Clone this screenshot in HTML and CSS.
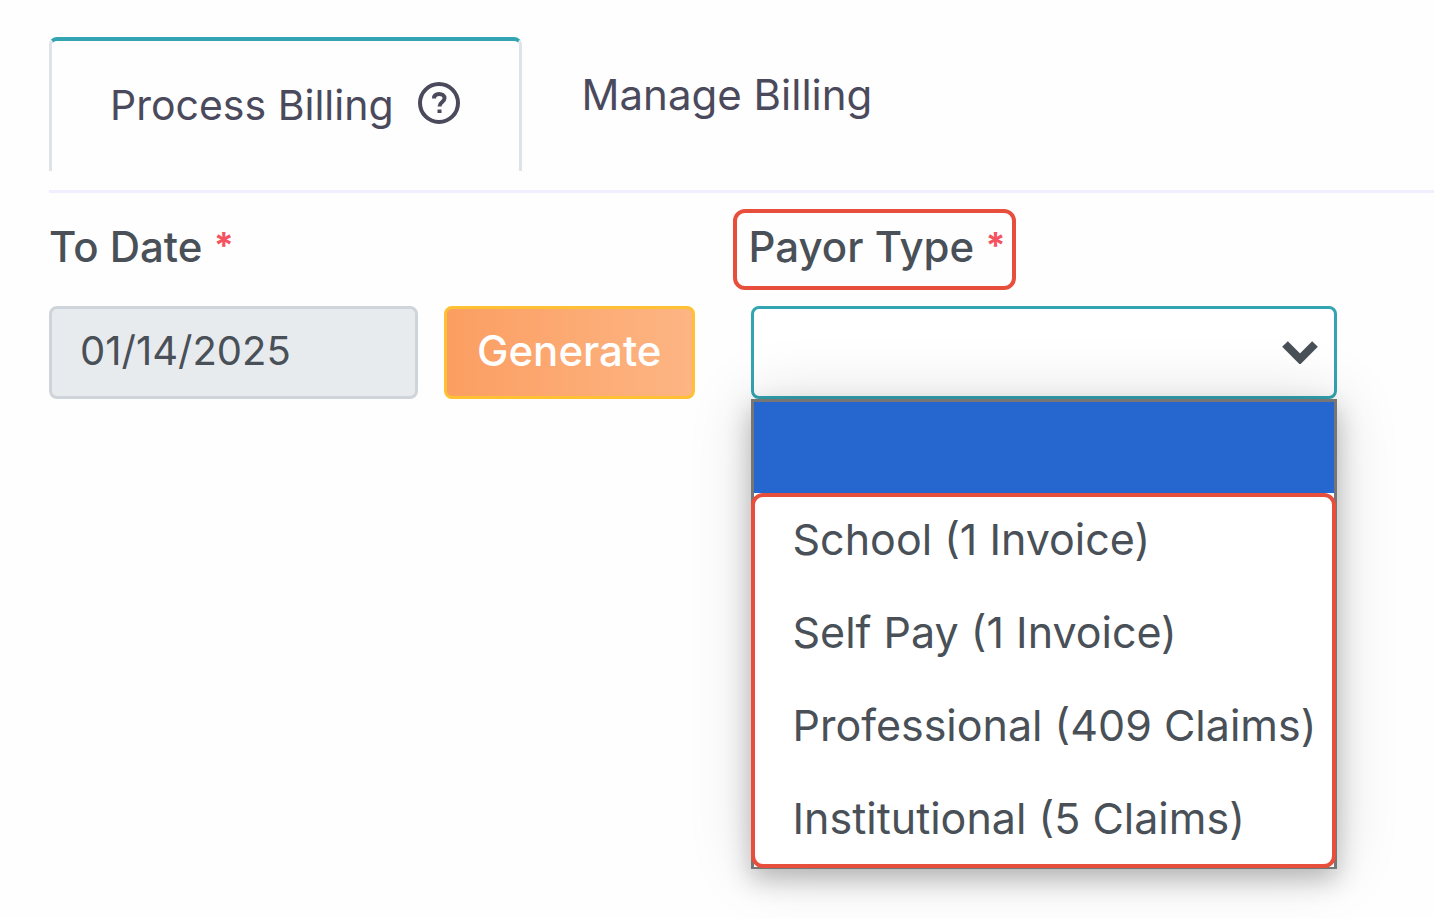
FILE: index.html
```html
<!DOCTYPE html>
<html lang="en">
  <head>
    <meta charset="UTF-8" />
    <meta name="viewport" content="width=device-width, initial-scale=1.0" />
    <title>Process Billing</title>
    <link rel="stylesheet" href="styles.css">
  </head>
  <body>
    <nav class="tabs">
      <a class="tab active" href="#process">
        Process Billing
        <svg class="help-icon" viewBox="0 0 42 42" aria-hidden="true">
          <circle cx="21" cy="21" r="19" />
          <path d="M16 16.5c0-3 2.200-4.500 5.200-4.500s5.300 1.700 5.300 4.300c0 3.700-5 3.700-5 8.200" />
          <path d="M21.500 27.500v3.500" />
        </svg>
      </a>
      <a class="tab" href="#manage">Manage Billing</a>
    </nav>

    <form class="billing-form">
      <div class="field">
        <label class="label" for="to-date">To Date <span class="required">*</span></label>
        <div class="control-row">
          <input class="control date" id="to-date" type="text" value="01/14/2025" readonly>
          <button class="control generate" type="button">Generate</button>
        </div>
      </div>

      <div class="field">
        <label class="label highlight" for="payor-type">Payor Type <span class="required">*</span></label>
        <div class="select-wrap">
          <select class="control payor" id="payor-type">
            <option></option>
          </select>
          <svg class="chevron" viewBox="0 0 36 24" aria-hidden="true">
            <path d="M3 4l15 15L33 4" />
          </svg>
          <!-- open list -->
          <div class="menu" role="listbox" aria-label="Payor Type">
            <div class="option selected" role="option" aria-selected="true"></div>
            <div class="menu-group">
              <div class="option" role="option">School (1 Invoice)</div>
              <div class="option" role="option">Self Pay (1 Invoice)</div>
              <div class="option" role="option">Professional (409 Claims)</div>
              <div class="option" role="option">Institutional (5 Claims)</div>
            </div>
          </div>
        </div>
      </div>
    </form>
  </body>
</html>
```
FILE: styles.css
```css
* {
  margin: 0;
  padding: 0;
  box-sizing: border-box;
}
body {
  min-height: 100vh;
  background-color: #fefefe;
  color: #495057;
  font-family: Inter, "Open Sans", sans-serif;
  font-size: 42px;
  line-height: 60px;
  padding: 37px 0 0 49px;
}

/* tabs */
.tabs {
  display: flex;
  align-items: flex-start;
  padding-bottom: 19px;
  border-bottom: 3px solid #f1effd;
}
.tab {
  color: #4a4a5c;
  text-decoration: none;
  white-space: nowrap;
  padding: 28px 60px;
}
.tab.active {
  display: flex;
  align-items: center;
  gap: 24px;
  font-size: 41px;
  padding: 34px 59px 36px 58px;
  border: 3px solid #dfe3e8;
  border-top: 4px solid #33a5b2;
  border-bottom: 0;
  border-radius: 8px 8px 0 0;
}
.help-icon {
  width: 42px;
  height: 42px;
  margin-top: -4px;
  fill: none;
  stroke: #4a4a5c;
  stroke-width: 4;
}

/* form */
.billing-form {
  display: grid;
  grid-template-columns: minmax(0, 645fr) minmax(0, 586fr);
  gap: 56px;
  padding: 16px 97px 0 0;
}
.label {
  display: block;
  width: fit-content;
  height: 81px;
  font-weight: 500;
  padding: 8px 0;
  margin-bottom: 16px;
  white-space: nowrap;
}
.required {
  color: #f5525f;
  font-size: 36px;
  font-weight: 700;
  line-height: 1;
  vertical-align: 4px;
}
.highlight {
  padding: 4px 6px 0 12px;
  margin-left: -18px;
  border: 4px solid #e74f3c;
  border-radius: 12px;
}
.control-row {
  display: flex;
  gap: 26px;
}
.control {
  height: 93px;
  font: inherit;
  color: inherit;
  border: 3px solid #ced4da;
  border-radius: 8px;
}
.date {
  flex: 1;
  min-width: 0;
  padding: 0 28px 4px;
  font-size: 40px;
  background: #e8ebee;
}
.generate {
  padding: 0 30px 4px;
  color: #fff;
  font-weight: 500;
  background: linear-gradient(to right, #fb9e62, #fdb583);
  border-color: #ffc034;
}
.select-wrap {
  position: relative;
}
.payor {
  display: block;
  width: 100%;
  appearance: none;
  background: #fff;
  border-color: #33a5b2;
}
.chevron {
  position: absolute;
  top: 34px;
  right: 19px;
  width: 36px;
  height: 24px;
  fill: none;
  stroke: #495057;
  stroke-width: 8;
}

/* dropdown list */
.menu {
  position: absolute;
  top: 100%;
  left: 0;
  right: 0;
  background: #fff;
  border: 3px solid #767676;
  border-bottom-width: 2px;
  box-shadow: 0 10px 24px rgba(0, 0, 0, 0.24), 0 0 60px rgba(0, 0, 0, 0.14);
}
.menu-group {
  margin: 0 -2px -1px -3px;
  border: 4px solid #e74f3c;
  border-radius: 12px;
}
.option {
  height: 93px;
  padding: 12px 0 0 38px;
  font-size: 43px;
  white-space: nowrap;
}
.option:last-child {
  height: 88px;
}
.option.selected {
  height: 91px;
  background: #2666cf;
}
```
